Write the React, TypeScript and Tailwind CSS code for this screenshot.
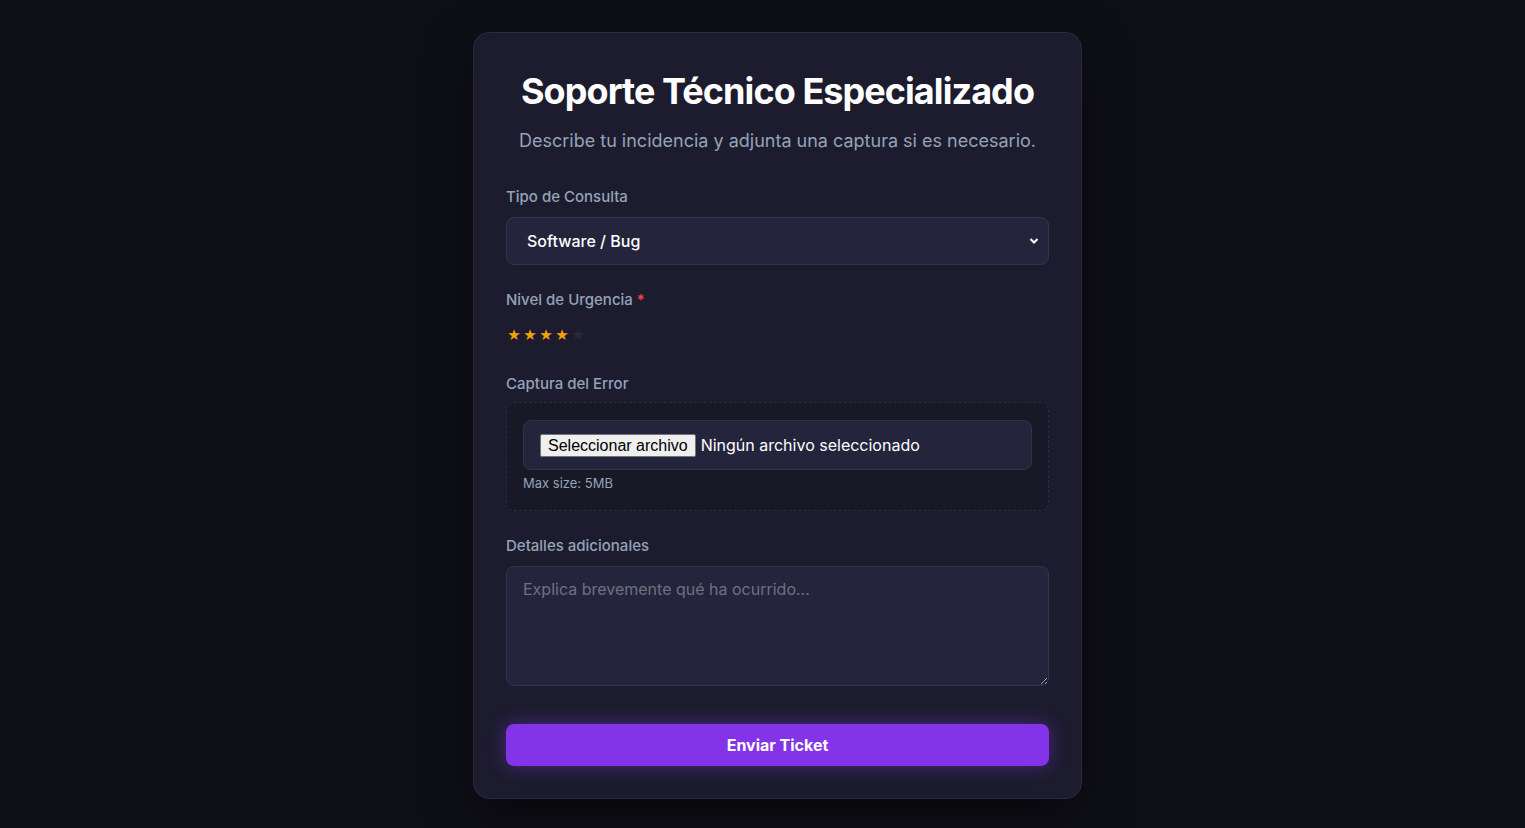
import { useState } from "react";

const STARS = [1, 2, 3, 4, 5];

export default function App() {
  const [rating, setRating] = useState(4);
  const [tipo, setTipo] = useState("software");

  return (
    <div
      className="min-h-screen w-full bg-[#0f0f17] flex justify-center pl-[30px] pt-8 pb-8"
      style={{ fontFamily: "Inter, 'Noto Sans', sans-serif" }}
    >
      <div className="w-[609px] h-fit rounded-2xl border border-[#2a2940] bg-[#1d1c2e] px-8 pt-[36px] pb-8 shadow-[0_20px_50px_rgba(0,0,0,0.5)]">
        <h1 className="text-center text-[36px] leading-[44px] font-bold tracking-[-0.026em] text-white">
          Soporte Técnico Especializado
        </h1>
        <p className="mt-[16px] text-center text-[18px] leading-6 text-[#94a3b8]">
          Describe tu incidencia y adjunta una captura si es necesario.
        </p>

        <label className="mt-[34px] block text-[15px] leading-5 font-medium text-[#94a3b8]">
          Tipo de Consulta
        </label>
        <div className="relative mt-[10px]">
          <select
            value={tipo}
            onChange={(e) => setTipo(e.target.value)}
            className="block h-12 w-full appearance-none rounded-lg border border-[#34334d] bg-[#25243d] pl-5 pr-10 text-[16px] font-medium text-white outline-none"
          >
            <option value="software">Software / Bug</option>
            <option value="hardware">Hardware</option>
            <option value="red">Red / Conectividad</option>
            <option value="cuenta">Cuenta / Acceso</option>
          </select>
          <svg
            className="pointer-events-none absolute right-[10px] top-1/2 -translate-y-1/2"
            width="10"
            height="8"
            viewBox="0 0 10 8"
          >
            <polyline points="1.5,2 5,5.5 8.5,2" fill="none" stroke="white" strokeWidth="2" />
          </svg>
        </div>

        <label className="mt-[25px] block text-[15px] leading-5 font-medium text-[#94a3b8]">
          Nivel de Urgencia <span className="text-[#ef4444]">*</span>
        </label>
        <div className="mt-[17px] flex items-center">
          {STARS.map((s) => (
            <button
              key={s}
              type="button"
              onClick={() => setRating(s)}
              className={`w-4 text-center text-[15px] leading-4 ${
                s <= rating ? "text-[#f59e0b]" : "text-[#2a2a3d]"
              }`}
              style={{ fontFamily: "'DejaVu Sans', sans-serif" }}
            >
              ★
            </button>
          ))}
        </div>

        <label className="mt-[31px] block text-[15px] leading-5 font-medium text-[#94a3b8]">
          Captura del Error
        </label>
        <div className="mt-[8px] rounded-lg border border-dashed border-[#2c2b40] bg-[#191827] px-4 pt-[17px] pb-[17px]">
          <div className="flex h-[50px] items-center rounded-lg border border-[#33324a] bg-[#25243d] px-4">
            <div className="flex items-center text-[16px]">
              <span
                className="rounded-[2px] border border-[#767676] bg-[#efefef] px-[7px] leading-[21px] text-black"
                style={{ fontFamily: "'Liberation Sans', Arial, sans-serif" }}
              >
                Seleccionar archivo
              </span>
              <span className="ml-[5px] text-white">Ningún archivo seleccionado</span>
            </div>
          </div>
          <div className="mt-[3px] text-[13px] leading-5 text-[#94a3b8]">Max size: 5MB</div>
        </div>

        <label className="mt-[25px] block text-[15px] leading-5 font-medium text-[#94a3b8]">
          Detalles adicionales
        </label>
        <textarea
          placeholder="Explica brevemente qué ha ocurrido..."
          className="mt-[10px] block h-[120px] w-full rounded-lg border border-[#34334d] bg-[#25243d] px-4 py-[10px] text-[16px] text-white outline-none placeholder:text-[#6b7280]"
        />

        <button
          type="button"
          className="mt-[38px] block h-[42px] w-full rounded-lg bg-[#8334e8] text-[16px] font-bold text-white shadow-[0_0_18px_rgba(131,52,232,0.45)]"
        >
          Enviar Ticket
        </button>
      </div>
    </div>
  );
}
